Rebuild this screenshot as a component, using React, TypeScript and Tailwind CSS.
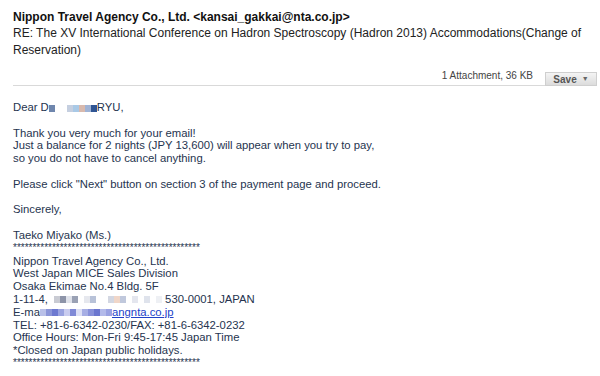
import React from 'react'

const FONT = { fontFamily: '"Liberation Sans", Arial, sans-serif' }

// pixelated redaction blocks
function Blur({ cells }: { cells: string[] }) {
  return (
    <span className="inline-flex align-middle">
      {cells.map((c, i) => (
        <span key={i} className="inline-block w-[6px] h-[7px]" style={{ backgroundColor: c }} />
      ))}
    </span>
  )
}

const STARS = '*'.repeat(48)

export default function App() {
  return (
    <div className="w-[600px] h-[376px] bg-white overflow-hidden text-[12px]" style={FONT}>
      <div className="pl-[13px] pr-[3px] pt-[9px]">
        <div className="font-bold text-[#111] leading-[16px]">
          Nippon Travel Agency Co., Ltd. &lt;kansai_gakkai@nta.co.jp&gt;
        </div>
        <div className="text-[#222] leading-[17px] pr-[10px]">
          RE: The XV International Conference on Hadron Spectroscopy (Hadron 2013) Accommodations(Change of
          Reservation)
        </div>

        <div className="flex items-end mt-[9px]">
          <div className="flex-1 flex justify-end border-b border-[#d9d9d9] pb-[2px] pr-[12px] text-[10px] text-[#444]">
            1 Attachment, 36 KB
          </div>
          <div className="w-[52px] h-[14px] flex items-center justify-center gap-[5px] text-[10px] font-bold text-[#555] bg-gradient-to-b from-[#f4f4f4] to-[#dcdcdc] border border-[#cfcfcf]">
            Save <span className="text-[7px] text-[#666]">▼</span>
          </div>
        </div>

        <div className="mt-[15px] text-[11.3px] text-[#26344f] leading-[12.8px]">
          <div>
            Dear D
            <Blur cells={['#6f86ad', '#fff', '#fff', '#c5cfe0', '#a9c9e6', '#d8b9ad', '#9fb3d5', '#2f5593']} />
            RYU,
          </div>
          <div className="h-[12.8px]" />
          <div>Thank you very much for your email!</div>
          <div>Just a balance for 2 nights (JPY 13,600) will appear when you try to pay,</div>
          <div>so you do not have to cancel anything.</div>
          <div className="h-[12.8px]" />
          <div>Please click "Next" button on section 3 of the payment page and proceed.</div>
          <div className="h-[12.8px]" />
          <div>Sincerely,</div>
          <div className="h-[12.8px]" />
          <div>Taeko Miyako (Ms.)</div>
          <div className="text-[10px] leading-[12.8px]">{STARS}</div>
          <div>Nippon Travel Agency Co., Ltd.</div>
          <div>West Japan MICE Sales Division</div>
          <div>Osaka Ekimae No.4 Bldg. 5F</div>
          <div>
            1-11-4,
            <Blur
              cells={['#fff', '#c9cbd3', '#8d94a8', '#dfe2ea', '#9aa1b4', '#fff', '#e6e8ee', '#b8c2d8', '#fff', '#fff', '#d3d7e2', '#f0d6c8', '#c0c8dc', '#fff', '#e4e6ee', '#fff', '#dfe3ec', '#fff', '#eef0f4']}
            />
            {' '}530-0001, JAPAN
          </div>
          <div>
            E-ma
            <Blur cells={['#b9c0e8', '#8b95d8', '#6d79d0', '#9aa3e0', '#c9ccef', '#7f89d6', '#dcdff5', '#a6aee4', '#8891da', '#6b76cf', '#b3baea', '#9aa2e2']} />
            <span className="text-[#2142c9] underline">angnta.co.jp</span>
          </div>
          <div>TEL: +81-6-6342-0230/FAX: +81-6-6342-0232</div>
          <div>Office Hours: Mon-Fri 9:45-17:45 Japan Time</div>
          <div>*Closed on Japan public holidays.</div>
          <div className="text-[10px] leading-[12.8px]">{STARS}</div>
        </div>
      </div>
    </div>
  )
}
